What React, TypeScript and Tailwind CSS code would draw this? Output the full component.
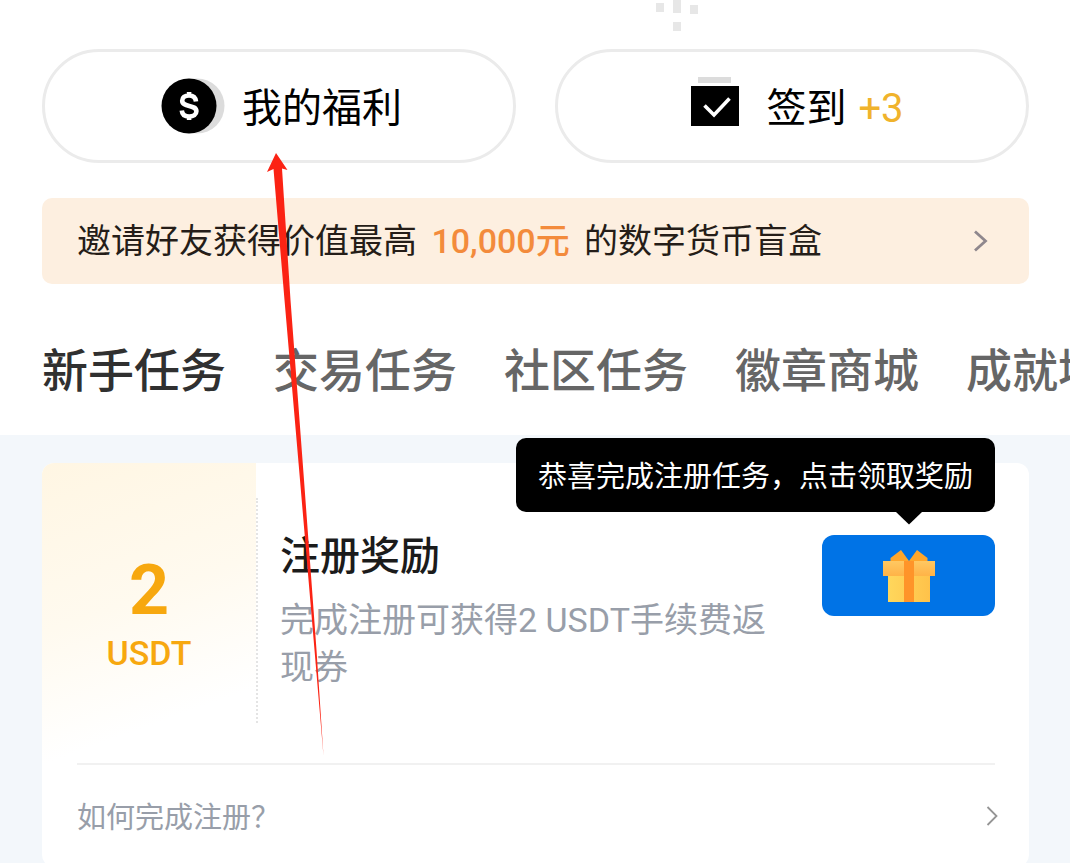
import { useState } from 'react';

/* ─── Data ─── */

interface Tab {
  id: string;
  label: string;
}

const tabs: Tab[] = [
  { id: 'newbie', label: '新手任务' },
  { id: 'trade', label: '交易任务' },
  { id: 'community', label: '社区任务' },
  { id: 'badge', label: '徽章商城' },
  { id: 'achievement', label: '成就墙' },
];

/* ─── Icons ─── */

function PixelMark() {
  return (
    <svg width="42" height="31" viewBox="0 0 42 31" fill="#e7e7e7" className="mr-[331px] ml-auto block" aria-hidden="true">
      <rect x="0" y="3" width="8" height="9" />
      <rect x="17" y="0" width="8" height="13" />
      <rect x="34" y="5" width="8" height="9" />
      <rect x="17" y="22" width="8" height="9" />
    </svg>
  );
}

function CoinIcon() {
  return (
    <svg width="70" height="70" viewBox="0 0 70 70" fill="none" aria-hidden="true">
      <circle cx="41" cy="35" r="27.5" fill="#dcdcdc" />
      <circle cx="33" cy="35" r="27.5" fill="#000" />
      <path
        d="M40 30.500c-.4-4-3-6-7-6-4.200 0-6.800 2.100-6.800 5.200 0 7.200 14.200 3.200 14.200 10.600 0 3.200-3 5.200-7.200 5.200-4.400 0-7.100-2.200-7.400-6M33.1 21v4M33.1 45v4"
        stroke="#fff"
        strokeWidth="4.600"
      />
    </svg>
  );
}

function CheckInIcon() {
  return (
    <svg width="70" height="70" viewBox="0 0 70 70" fill="none" aria-hidden="true">
      <rect x="18" y="6" width="33" height="6" fill="#dcdcdc" />
      <rect x="11" y="15" width="48" height="40" fill="#000" />
      <path d="M24.500 34.500l9.500 9.500 15.500-16.500" stroke="#fff" strokeWidth="3.600" />
    </svg>
  );
}

function GiftIcon() {
  return (
    <svg width="54" height="54" viewBox="0 0 54 54" aria-hidden="true">
      <defs>
        <linearGradient id="lid" x1="0" y1="0" x2="0" y2="1">
          <stop offset="0" stopColor="#ffc862" />
          <stop offset="1" stopColor="#ffb347" />
        </linearGradient>
        <linearGradient id="box" x1="0" y1="0" x2="1" y2="0">
          <stop offset="0" stopColor="#ffd75c" />
          <stop offset="1" stopColor="#ffc24a" />
        </linearGradient>
      </defs>
      <path d="M27 12L19 1 8.500 9v4H27z" fill="#ffa62b" />
      <path d="M27 12l8-11 10.500 8v4H27z" fill="#ffa62b" />
      <path d="M6 26h42v27H6z" fill="url(#box)" />
      <path d="M1 12h52v15H1z" fill="url(#lid)" />
      <path d="M22 12h10v41H22z" fill="#ff9429" />
    </svg>
  );
}

/* ─── Hand-drawn pointer to the benefits button ─── */

function PointerArrow() {
  return (
    <svg
      width="58"
      height="604"
      viewBox="0 0 58 604"
      className="pointer-events-none absolute top-[153px] left-[266px]"
      aria-hidden="true"
    >
      <path d="M10 0L21.500 17l-5.500-1.500L24.500 147 38 327 50.500 497 57.500 603 48.500 497 34 327 18.500 147 7.500 16 1 19z" fill="#fb2314" />
    </svg>
  );
}

/* ─── Sections ─── */

function TaskCard() {
  return (
    <article className="rounded-xl bg-white">
      <div className="flex h-[300px]">
        <div className="flex w-[214px] shrink-0 flex-col items-center justify-center rounded-tl-xl bg-linear-160 from-[#fff6e3] via-[#fffaef] via-45% to-white to-80% pt-1.5 font-medium text-[#f7a80f]">
          <strong className="text-[70px] leading-[70px] font-bold">2</strong>
          <span className="mt-1 text-[34px] leading-[48px]">USDT</span>
        </div>
        <div className="my-[35px] mb-10 border-l-2 border-dotted border-[#e4e4e4]" />
        <div className="flex flex-1 flex-col justify-center pr-6 pb-1.5 pl-[22px]">
          <h2 className="text-[40px] leading-[56px] font-medium text-[#1b1b1b]">注册奖励</h2>
          <p className="mt-3 text-[34px] leading-[47px] text-[#989ea9]">完成注册可获得2 USDT手续费返现券</p>
        </div>
        <div className="relative mt-[72px] mr-[34px] h-[81px] w-[173px] shrink-0">
          <button
            type="button"
            aria-label="领取奖励"
            className="flex h-full w-full cursor-pointer items-center justify-center rounded-xl bg-[#0073e6]"
          >
            <GiftIcon />
          </button>
          <div role="tooltip" className="absolute right-0 bottom-[104px] rounded-[10px] bg-black px-[22px] pt-[17px] pb-[13px] text-[29px] leading-[44px] whitespace-nowrap text-white">
            恭喜完成注册任务，点击领取奖励
            <svg width="26" height="13" viewBox="0 0 26 13" className="absolute top-full right-[73px]" aria-hidden="true">
              <path d="M0 0h26L13 12.500z" fill="#000" />
            </svg>
          </div>
        </div>
      </div>
      <a
        href="#how-to-register"
        className="mr-[34px] ml-[35px] flex h-[104px] items-center justify-between border-t-2 border-[#f1f1f1] text-[29px] leading-[44px] text-[#989ea9]"
      >
        <span className="pt-1">如何完成注册？</span>
        <svg width="16" height="24" viewBox="0 0 16 24" fill="none" className="-mr-1" aria-hidden="true">
          <path d="M4.500 3l9 9-9 9" stroke="#959595" strokeWidth="1.800" />
        </svg>
      </a>
    </article>
  );
}

export default function App() {
  const [activeId, setActiveId] = useState(tabs[0].id);

  return (
    <main className="relative flex h-screen flex-col overflow-hidden bg-white font-['Roboto','Noto_Sans_CJK_SC',sans-serif]">
      <header className="shrink-0 pr-[41px] pl-[42px]">
        <PixelMark />

        <div className="mt-[18px] grid grid-cols-2 gap-[39px] text-[40px] text-black">
          <button type="button" className="flex h-[114px] cursor-pointer items-center justify-center gap-4 rounded-full border-3 border-[#ebebeb]">
            <CoinIcon />
            <span className="pt-1.5">我的福利</span>
          </button>
          <button type="button" className="flex h-[114px] cursor-pointer items-center justify-center gap-4 rounded-full border-3 border-[#ebebeb]">
            <CheckInIcon />
            <span className="pt-1.5">
              签到<span className="ml-3 text-[#f0b32c]">+3</span>
            </span>
          </button>
        </div>

        <a
          href="#invite"
          className="mt-[35px] flex h-[86px] items-center justify-between rounded-[10px] bg-[#fdefe0] pr-[40px] pl-[35px] text-[34px] text-[#251d18]"
        >
          <span>
            邀请好友获得价值最高 <b className="mx-1.5 font-medium text-[#f38b3c]">10,000元</b> 的数字货币盲盒
          </span>
          <svg width="16" height="24" viewBox="0 0 16 24" fill="none" aria-hidden="true">
            <path d="M2 2.500l10.500 9.500L2 21.500" stroke="#8f878d" strokeWidth="2.800" />
          </svg>
        </a>
      </header>

      <nav role="tablist" className="mt-[53px] flex shrink-0 gap-[47px] overflow-hidden pb-[30px] pl-[42px] text-[46px] leading-[68px] font-medium whitespace-nowrap">
        {tabs.map((tab) => (
          <button
            key={tab.id}
            type="button"
            role="tab"
            aria-selected={tab.id === activeId}
            onClick={() => setActiveId(tab.id)}
            className={`shrink-0 cursor-pointer ${tab.id === activeId ? 'text-[#303030]' : 'text-[#666666]'}`}
          >
            {tab.label}
          </button>
        ))}
      </nav>

      <section className="flex-1 bg-[#f3f7fb] pt-7 pr-[41px] pl-[42px]">
        <TaskCard />
      </section>

      <PointerArrow />
    </main>
  );
}
